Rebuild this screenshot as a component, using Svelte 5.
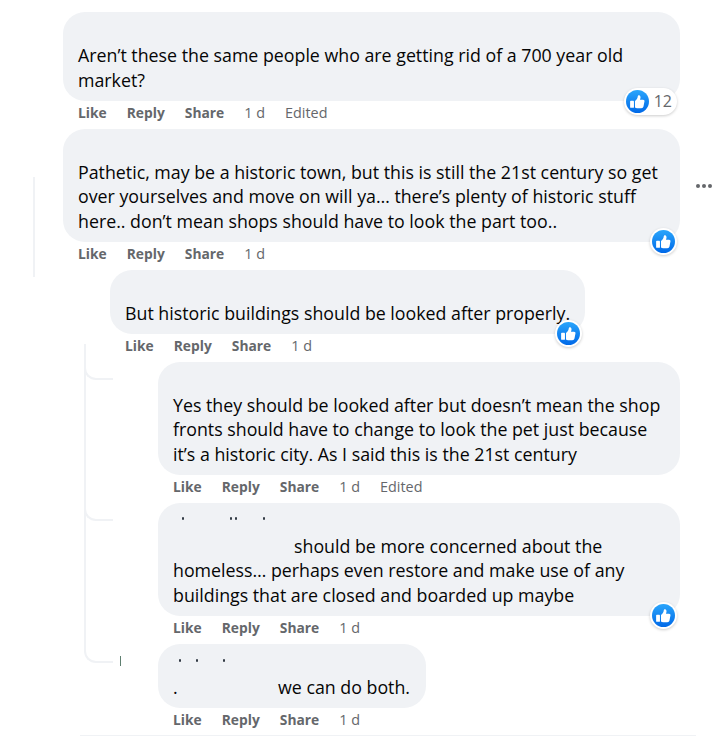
<script>
  const comments = [
    { level: 0, width: 617, lines: ['Aren’t these the same people who are getting rid of a 700 year old market?'], edited: true, count: 12, textW: 580 },
    { level: 0, width: 617, lines: ['Pathetic, may be a historic town, but this is still the 21st century so get over yourselves and move on will ya… there’s plenty of historic stuff here.. don’t mean shops should have to look the part too..'], like: true, textW: 590 },
    { level: 1, width: 475, lines: ['But historic buildings should be looked after properly.'], like: true, textW: 460 },
    { level: 2, width: 522, lines: ['Yes they should be looked after but doesn’t mean the shop fronts should have to change to look the pet just because it’s a historic city. As I said this is the 21st century'], edited: true, textW: 495 },
    { level: 2, width: 522, dots: 'a', indent: 121, lines: ['should be more concerned about the homeless… perhaps even restore and make use of any buildings that are closed and boarded up maybe'], like: true, textW: 495 },
    { level: 2, width: 268, dots: 'b', indent: 105, lead: true, lines: ['we can do both.'], textW: 245 }
  ];
</script>

<main class="page">
  <span class="rail-left"></span>
  <span class="rail"></span>
  <span class="branch b1"></span>
  <span class="branch b2"></span>
  <span class="branch b3"></span>
  <span class="tick"></span>
  <span class="more"><i></i><i></i><i></i></span>

  {#each comments as c}
    <article class="comment level{c.level}">
      <div class="bubble" style="width:{c.width}px">
        <div class="name">
          {#if c.dots === 'a'}
            <i class="dot da1"></i><i class="dot da2"></i><i class="dot da3"></i><i class="dot da4"></i>
          {:else if c.dots === 'b'}
            <i class="dot db1"></i><i class="dot db2"></i><i class="dot db3"></i>
          {/if}
        </div>
        <p style="max-width:{c.textW}px">
          {#if c.lead}<span class="lead">.</span>{/if}{#if c.indent}<span class="gap" style="width:{c.indent - (c.lead ? 5 : 0)}px"></span>{/if}{c.lines[0]}
        </p>
        {#if c.count}
          <span class="badge pill">
            <svg viewBox="0 0 24 24" width="23" height="23"><use href="#thumb" /></svg>
            <span>{c.count}</span>
          </span>
        {:else if c.like}
          <span class="badge">
            <svg viewBox="0 0 24 24" width="23" height="23"><use href="#thumb" /></svg>
          </span>
        {/if}
      </div>
      <div class="actions">
        <b>Like</b><b>Reply</b><b>Share</b><span>1 d</span>
        {#if c.edited}<span>Edited</span>{/if}
      </div>
    </article>
  {/each}
  <hr />

  <svg class="defs" width="0" height="0" aria-hidden="true">
    <defs>
      <linearGradient id="blue" x1="0" y1="0" x2="0" y2="1">
        <stop offset="0" stop-color="#2aa5fb" />
        <stop offset="1" stop-color="#0069e8" />
      </linearGradient>
      <symbol id="thumb" viewBox="0 0 24 24">
        <circle cx="12" cy="12" r="12" fill="url(#blue)" />
        <path fill="#fff" d="M5 11.2h2.6c.4 0 .7.3.7.7v6c0 .4-.3.7-.7.7H5c-.4 0-.7-.3-.7-.7v-6c0-.4.3-.7.7-.7z" />
        <path fill="#fff" d="M9.4 11.4c1.6-1 2.7-2.700 2.900-4.800.1-.8.6-1.300 1.300-1.200 1.200.2 1.800 1.400 1.500 3-.1.6-.3 1.200-.5 1.700h3.200c1 0 1.700.8 1.500 1.700l-1 5.200c-.2 1.300-1.100 2.100-2.400 2.100h-4.300c-.9 0-1.600-.3-2.200-.8z" />
      </symbol>
    </defs>
  </svg>
</main>

<style>
  :global(body) {
    margin: 0;
    background: #fff;
  }
  .page {
    position: relative;
    box-sizing: border-box;
    height: 736px;
    padding: 12px 0 0 63px;
    overflow: hidden;
    font-family: "Open Sans", "Noto Sans", sans-serif;
    color: #050505;
  }
  .level1 { margin-left: 47px; }
  .level2 { margin-left: 95px; }
  .bubble {
    position: relative;
    box-sizing: border-box;
    padding: 0 5px 8.6px 15px;
    background: #f0f2f5;
    border-radius: 22px;
  }
  .name {
    position: relative;
    height: 31px;
  }
  .dot {
    position: absolute;
    width: 2px;
    height: 3px;
    background: #333b45;
    border-radius: 1px;
  }
  .da1 { left: 9px; top: 14px; }
  .da2 { left: 57px; top: 14px; }
  .da3 { left: 62px; top: 14px; }
  .da4 { left: 90px; top: 14px; }
  .db1 { left: 6px; top: 15px; }
  .db2 { left: 23px; top: 15px; }
  .db3 { left: 50px; top: 15px; }
  p {
    margin: 0;
    font-size: 17.8px;
    line-height: 24.5px;
  }
  .gap { display: inline-block; }
  .lead { display: inline-block; width: 5px; }
  .actions {
    display: flex;
    align-items: center;
    gap: 20px;
    box-sizing: border-box;
    height: 28px;
    padding: 0 0 5px 15px;
    font-size: 14.4px;
    color: #65676b;
  }
  .actions b {
    font-size: 13.8px;
    font-weight: 700;
  }
  .badge {
    position: absolute;
    right: 3px;
    bottom: -13px;
    display: flex;
    align-items: center;
    padding: 2px;
    background: #fff;
    border-radius: 14px;
    box-shadow: 0 1px 3px rgba(0, 0, 0, 0.2);
  }
  .badge svg { display: block; }
  .pill {
    bottom: -14px;
    gap: 5px;
    padding-right: 5px;
    font-size: 16px;
    color: #65676b;
  }
  .rail-left {
    position: absolute;
    left: 33px;
    top: 177px;
    width: 2px;
    height: 100px;
    background: #f0f2f5;
  }
  .rail {
    position: absolute;
    left: 84px;
    top: 344px;
    width: 2px;
    height: 300px;
    background: #f0f2f5;
  }
  .branch {
    position: absolute;
    left: 84px;
    width: 29px;
    height: 20px;
    box-sizing: border-box;
    border-left: 2px solid #f0f2f5;
    border-bottom: 2px solid #f0f2f5;
    border-bottom-left-radius: 12px;
  }
  .b1 { top: 360px; }
  .b2 { top: 501px; }
  .b3 { top: 643px; }
  .tick {
    position: absolute;
    left: 120px;
    top: 656px;
    width: 1px;
    height: 10px;
    background: #5f7f70;
  }
  .more {
    position: absolute;
    left: 696px;
    top: 184px;
    display: flex;
    gap: 2px;
  }
  .more i {
    width: 4px;
    height: 4px;
    border-radius: 50%;
    background: #65676b;
  }
  hr {
    position: absolute;
    left: 80px;
    top: 735px;
    width: 616px;
    margin: 0;
    border: 0;
    height: 1px;
    background: #f0f2f5;
  }
  .defs { position: absolute; }
</style>
